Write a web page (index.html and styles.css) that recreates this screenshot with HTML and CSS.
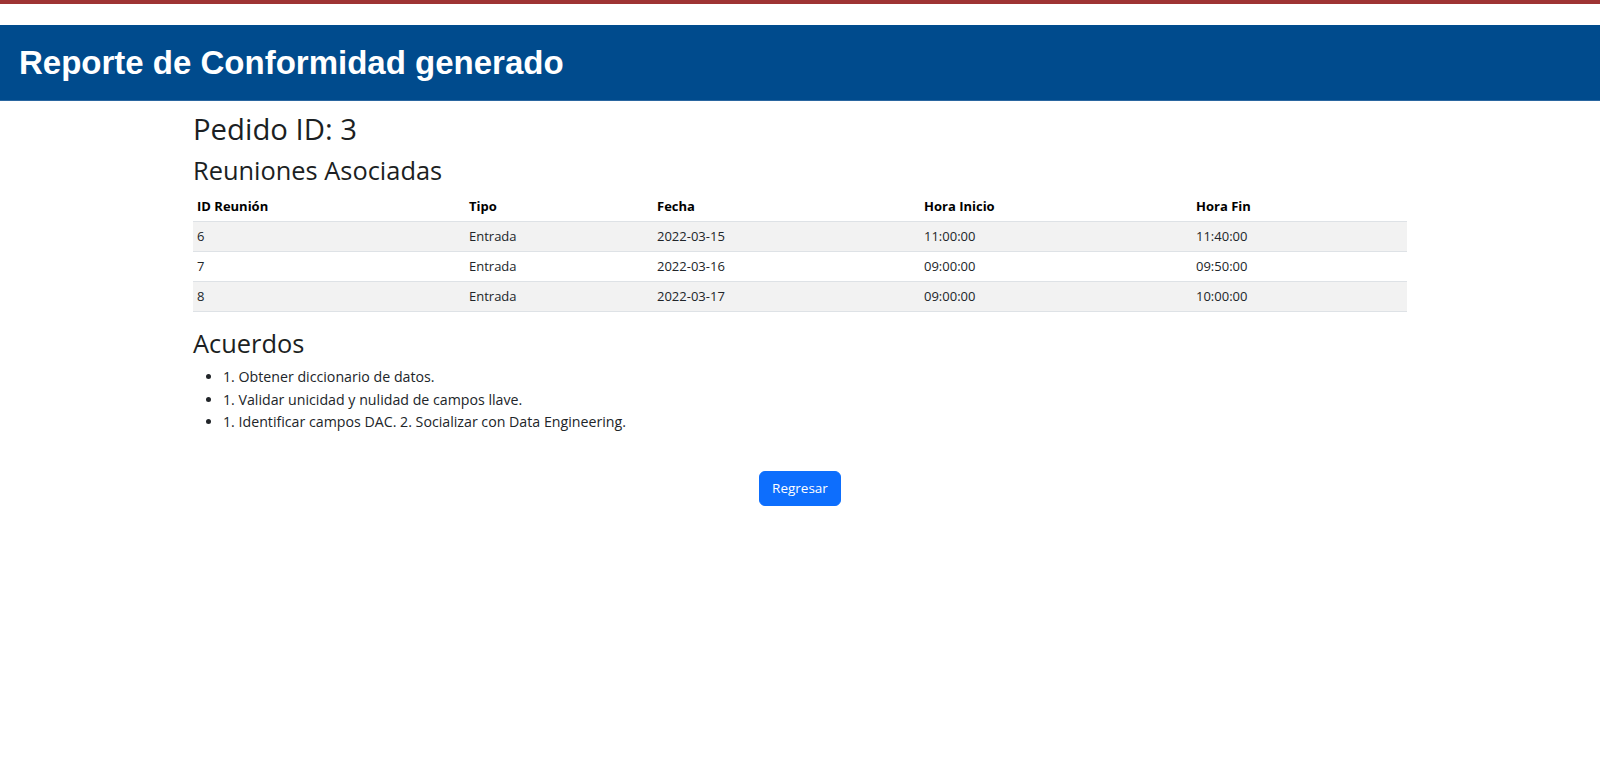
FILE: index.html
```html
<!DOCTYPE html>
<html lang="es">
<head>
<meta charset="utf-8">
<title>Reporte de Conformidad</title>
<link rel="stylesheet" href="styles.css">
</head>
<body>
<div class="topbar"></div>
<header class="page-header">
  <h1 class="page-title">Reporte de Conformidad generado</h1>
</header>
<main class="container">
  <h3 class="heading-lg">Pedido ID: 3</h3>
  <h4 class="heading-md heading-reuniones">Reuniones Asociadas</h4>
  <table class="meetings">
    <colgroup>
      <col class="c-id"><col class="c-tipo"><col class="c-fecha"><col class="c-ini"><col class="c-fin">
    </colgroup>
    <thead>
      <tr><th>ID Reunión</th><th>Tipo</th><th>Fecha</th><th>Hora Inicio</th><th>Hora Fin</th></tr>
    </thead>
    <tbody>
      <tr class="striped"><td>6</td><td>Entrada</td><td>2022-03-15</td><td>11:00:00</td><td>11:40:00</td></tr>
      <tr><td>7</td><td>Entrada</td><td>2022-03-16</td><td>09:00:00</td><td>09:50:00</td></tr>
      <tr class="striped"><td>8</td><td>Entrada</td><td>2022-03-17</td><td>09:00:00</td><td>10:00:00</td></tr>
    </tbody>
  </table>
  <h4 class="heading-md">Acuerdos</h4>
  <ul class="agreements">
    <li>1. Obtener diccionario de datos.</li>
    <li>1. Validar unicidad y nulidad de campos llave.</li>
    <li>1. Identificar campos DAC. 2. Socializar con Data Engineering.</li>
  </ul>
  <div class="actions">
    <button class="btn-primary" type="button">Regresar</button>
  </div>
</main>
</body>
</html>
```

FILE: styles.css
```css
* { box-sizing: border-box; }
html, body { margin: 0; padding: 0; background: #fff; }
body {
  font-family: "Open Sans", "Noto Sans", sans-serif;
  font-size: 14.2px;
  line-height: 22.5px;
  color: #212529;
}
.topbar { height: 4px; background: #9e3434; }
.page-header {
  margin-top: 21px;
  height: 76px;
  background: #004b8d;
  padding: 19px 19px 0;
  border-bottom: 1px solid #2a66a0;
}
.page-title {
  margin: 0;
  font-family: "Liberation Sans", Arial, sans-serif;
  font-weight: bold;
  font-size: 33px;
  line-height: 38px;
  color: #fff;
}
.container {
  width: 1214px;
  margin: 0 auto;
  padding-top: 11px;
}
.heading-lg {
  margin: 0 0 8px;
  font-size: 29.3px;
  font-weight: 500;
  line-height: 1.2;
  color: #1c1f23;
}
.heading-md {
  margin: 0 0 8px;
  font-size: 25.4px;
  font-weight: 500;
  line-height: 1.2;
  color: #1c1f23;
}
.heading-reuniones { margin-bottom: 6px; }
.meetings {
  width: 100%;
  border-collapse: collapse;
  font-size: 13px;
  line-height: 21px;
  margin: 0 0 16px;
}
.c-id { width: 272px; }
.c-tipo { width: 188px; }
.c-fecha { width: 267px; }
.c-ini { width: 272px; }
.c-fin { width: 215px; }
.meetings th, .meetings td {
  padding: 4px 4px;
  text-align: left;
  border-bottom: 1px solid #dee2e6;
}
.meetings th { font-weight: 700; color: #000; }
.meetings td { color: #212529; }
.meetings tr.striped td { background: #f2f2f2; }
.agreements {
  margin: 0 0 16px;
  padding-left: 30px;
}
.actions {
  display: flex;
  justify-content: center;
  padding-top: 21px;
}
.btn-primary {
  font-family: inherit;
  font-size: 13.5px;
  line-height: 21px;
  padding: 6px 12px;
  color: #fff;
  background: #0d6efd;
  border: 1px solid #0d6efd;
  border-radius: 6px;
  cursor: pointer;
}
```
